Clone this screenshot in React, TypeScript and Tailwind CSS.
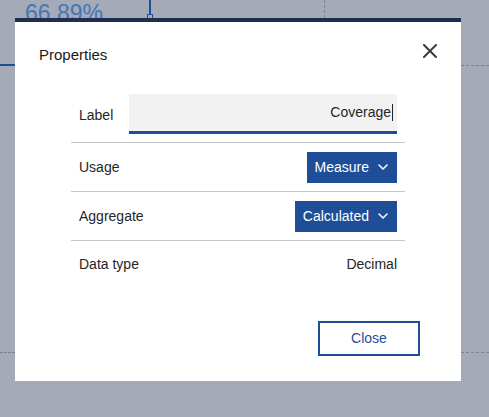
import React from "react";

const FONT = { fontFamily: '"Liberation Sans", Arial, sans-serif' };

function Chevron() {
  return (
    <svg width="10" height="6" viewBox="0 0 10 6" fill="none" className="ml-[9px]">
      <polyline points="1,1 5,5 9,1" stroke="white" strokeWidth="1.5" strokeLinecap="round" strokeLinejoin="round" />
    </svg>
  );
}

function SelectButton({ value }: { value: string }) {
  return (
    <button className="flex h-[31px] items-center bg-[#1f4e99] pl-[8px] pr-[9px] text-[14px] text-white">
      {value}
      <Chevron />
    </button>
  );
}

export default function App() {
  return (
    <div className="relative h-[417px] w-[489px] overflow-hidden bg-[#a4aab6]" style={FONT}>
      {/* chart behind the overlay */}
      <div className="absolute left-[25px] top-[2px] text-[23px] leading-none text-[#4576b6]">66.89%</div>
      <div className="absolute left-[149px] top-0 h-[15px] w-[2px] bg-[#1f4e99]" />
      <div className="absolute left-[147px] top-[14px] h-[5px] w-[6px] border border-[#1f4e99]" />
      <div className="absolute left-[324px] top-0 h-[18px] border-l border-dashed border-[#7d8391]" />
      <div className="absolute left-0 top-[64px] h-[2px] w-[15px] bg-[#1f4e99]" />
      <div className="absolute left-[461px] top-[65px] w-[28px] border-t border-dashed border-[#7d8391]" />
      <div className="absolute left-0 top-[352px] w-[15px] border-t border-dashed border-[#7d8391]" />
      <div className="absolute left-[461px] top-[352px] w-[28px] border-t border-dashed border-[#7d8391]" />

      {/* dialog */}
      <div className="absolute left-[15px] top-[18px] flex h-[363px] w-[446px] flex-col border-t-4 border-[#1c2f50] bg-white">
        <div className="flex items-center justify-between pl-[24px] pr-[24px] pt-[23px]">
          <h2 className="text-[15px] leading-[20px] text-[#1a1a1a]">Properties</h2>
          <svg width="14" height="14" viewBox="0 0 14 14" className="-mt-[8px]">
            <path d="M1 1 L13 13 M13 1 L1 13" stroke="#3d3d3d" strokeWidth="2" strokeLinecap="square" />
          </svg>
        </div>

        <div className="mx-[56px] mt-[25px] flex flex-col text-[14px] text-[#262626]">
          <div className="flex h-[53px] items-start border-b border-[#c4c8cc] pt-[4px]">
            <span className="w-[50px] pl-[8px] pt-[11px]">Label</span>
            <div className="ml-[8px] flex h-[40px] w-[268px] items-center justify-end border-b-[3px] border-[#1f4e99] bg-[#f2f2f2] pr-[4px]">
              <span>Coverage</span>
              <span className="ml-px h-[17px] w-px bg-[#262626]" />
            </div>
          </div>
          <div className="flex h-[49px] items-center justify-between border-b border-[#c4c8cc] pl-[8px] pr-[8px]">
            <span>Usage</span>
            <SelectButton value="Measure" />
          </div>
          <div className="flex h-[49px] items-center justify-between border-b border-[#c4c8cc] pl-[8px] pr-[8px]">
            <span>Aggregate</span>
            <SelectButton value="Calculated" />
          </div>
          <div className="flex h-[47px] items-center justify-between pl-[8px] pr-[8px]">
            <span>Data type</span>
            <span>Decimal</span>
          </div>
        </div>

        <div className="mt-auto flex justify-end pb-[25px] pr-[41px]">
          <button className="h-[35px] w-[102px] border-2 border-[#1f4e99] text-[14px] text-[#1f4e99]">Close</button>
        </div>
      </div>
    </div>
  );
}
